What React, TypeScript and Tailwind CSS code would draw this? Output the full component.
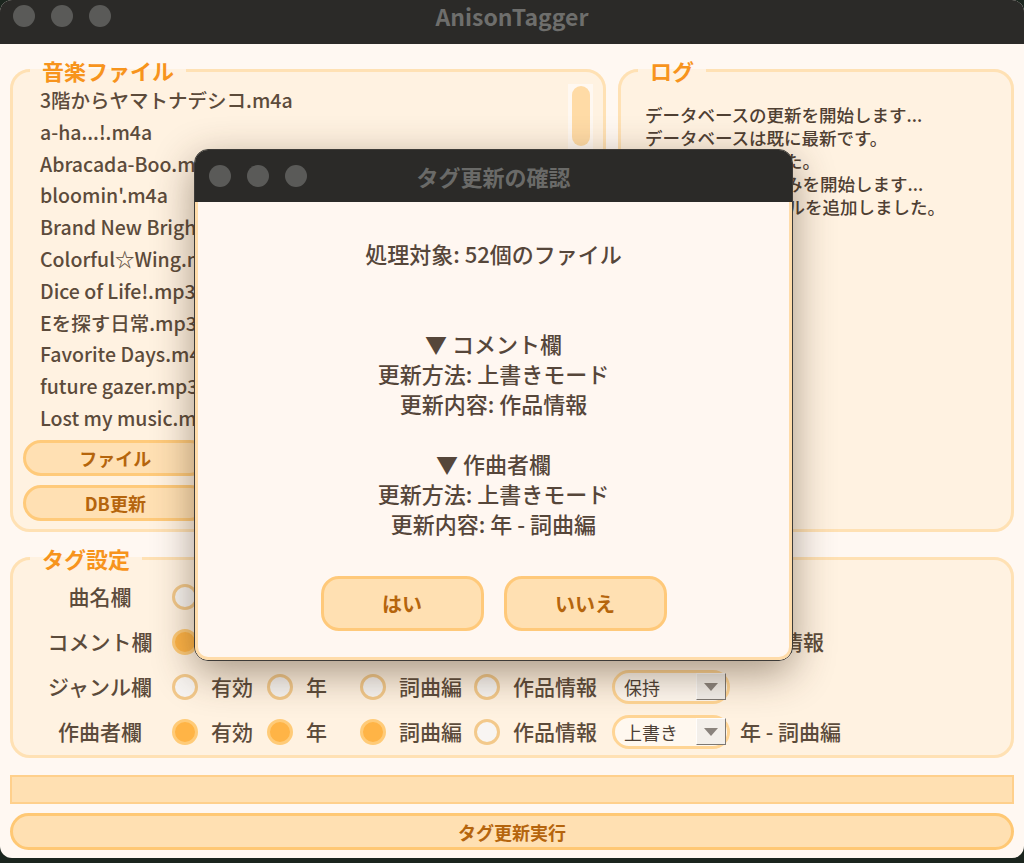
import React from "react";

const files = [
  "3階からヤマトナデシコ.m4a",
  "a-ha...!.m4a",
  "Abracada-Boo.m4a",
  "bloomin'.m4a",
  "Brand New Brightness.m4a",
  "Colorful☆Wing.m4a",
  "Dice of Life!.mp3",
  "Eを探す日常.mp3",
  "Favorite Days.m4a",
  "future gazer.mp3",
  "Lost my music.m4a",
  "Moving Sound.m4a",
  "Now Loading!!!!.m4a",
];

const logs = [
  "データベースの更新を開始します...",
  "データベースは既に最新です。",
  "更新が完了しました。",
  "ファイルの読み込みを開始します...",
  "52個の音楽ファイルを追加しました。",
];

function Radio({ checked }: { checked: boolean }) {
  return checked ? (
    <span className="block w-[26px] h-[26px] shrink-0 rounded-full border-[3px] border-[#ffcb78] bg-[#ffb446]" />
  ) : (
    <span className="block w-[26px] h-[26px] shrink-0 rounded-full border-[3px] border-[#f3c98b] bg-[#f8f5f2]" />
  );
}

function Option({ checked, label, w }: { checked: boolean; label: string; w: string }) {
  return (
    <div className={`flex items-center gap-[13px] ${w}`}>
      <Radio checked={checked} />
      <span>{label}</span>
    </div>
  );
}

function Combo({ value }: { value: string }) {
  return (
    <div className="flex items-center w-[118px] h-[34px] rounded-full border-[3px] border-[#ffd595] bg-[#fff8ef] pl-[9px] pr-[1px]">
      <span className="flex-1 text-[18px] font-normal text-[#4d4035] leading-none">{value}</span>
      <span className="flex items-center justify-center w-[30px] h-[27px] bg-[#f3efea] border-t border-l border-t-[#fffdfb] border-l-[#fffdfb] border-r border-b border-r-[#7d7873] border-b-[#7d7873]">
        <svg width="14" height="8" viewBox="0 0 14 8">
          <path d="M0 0 L14 0 L7 8 Z" fill="#8a837d" />
        </svg>
      </span>
    </div>
  );
}

function TagRow({
  label,
  v,
  combo,
  extra,
}: {
  label: string;
  v: [boolean, boolean, boolean, boolean];
  combo: string;
  extra?: string;
}) {
  return (
    <div className="flex items-center h-[45px] pl-[27px]">
      <div className="w-[120px] text-center">{label}</div>
      <div className="ml-[12px] flex items-center">
        <Option checked={v[0]} label="有効" w="w-[95px]" />
        <Option checked={v[1]} label="年" w="w-[93px]" />
        <Option checked={v[2]} label="詞曲編" w="w-[114px]" />
        <Option checked={v[3]} label="作品情報" w="w-[138px]" />
        <Combo value={combo} />
        {extra && <span className="ml-[10px]">{extra}</span>}
      </div>
    </div>
  );
}

function Lights() {
  return (
    <div className="flex items-center gap-[16px]">
      <span className="block w-[22px] h-[22px] rounded-full bg-[#5a5a58]" />
      <span className="block w-[22px] h-[22px] rounded-full bg-[#5a5a58]" />
      <span className="block w-[22px] h-[22px] rounded-full bg-[#5a5a58]" />
    </div>
  );
}

function PanelButton({ label }: { label: string }) {
  return (
    <button className="h-[36px] rounded-full border-[3px] border-[#ffca7a] bg-[#ffe0b3] text-[#b5650d] font-bold text-[18px] leading-none">
      {label}
    </button>
  );
}

export default function App() {
  return (
    <div className="relative w-[1024px] h-[863px] bg-[#1b251e] font-['Noto_Sans_CJK_JP','Noto_Sans',sans-serif] text-[#5c4b3b]">
      <div className="flex flex-col h-[858px] rounded-[12px] overflow-hidden bg-[#fff8f2]">
        {/* title bar */}
        <div className="relative h-[44px] bg-[#2b2a28] shrink-0">
          <div className="absolute left-[13px] top-[5px]">
            <Lights />
          </div>
          <div className="flex justify-center pt-[2px]">
            <span className="text-[23px] font-bold text-[#6e6e6c] leading-[28px]">AnisonTagger</span>
          </div>
        </div>

        <div className="flex flex-col px-[10px] pb-[8px] pt-[14px]">
          {/* top panels */}
          <div className="flex gap-[12px] h-[474px]">
            <fieldset className="w-[596px] rounded-[20px] border-[3px] border-[#ffe1b4] bg-[#fff2e1]">
              <legend className="ml-[17px] px-[12px] text-[22px] leading-[24px] font-bold text-[#f7941d]">
                音楽ファイル
              </legend>
              <div className="px-[10px] pt-[2px]">
                <div className="flex h-[350px] overflow-hidden">
                  <div className="flex-1 pl-[17px] text-[19.5px] font-medium">
                    {files.map((f) => (
                      <div key={f} className="h-[31.8px] leading-[31.8px] whitespace-nowrap">
                        {f}
                      </div>
                    ))}
                  </div>
                  <div className="w-[25px] bg-[#fff8f1] pt-[2px] pl-[4px]">
                    <div className="w-[18px] h-[60px] rounded-full bg-[#ffdba6]" />
                  </div>
                </div>
                <div className="grid grid-cols-3 gap-x-[8px] gap-y-[9px] mt-[6px]">
                  <PanelButton label="ファイル" />
                  <PanelButton label="フォルダ" />
                  <PanelButton label="クリア" />
                  <PanelButton label="DB更新" />
                  <PanelButton label="DB再構築" />
                  <PanelButton label="設定" />
                </div>
              </div>
            </fieldset>

            <fieldset className="flex-1 rounded-[20px] border-[3px] border-[#ffe1b4] bg-[#fff2e1]">
              <legend className="ml-[17px] px-[12px] text-[22px] leading-[24px] font-bold text-[#f7941d]">
                ログ
              </legend>
              <div className="pl-[24px] pt-[21px] text-[17.5px] leading-[23px] font-medium text-[#4f4033]">
                {logs.map((l) => (
                  <div key={l} className="whitespace-nowrap">
                    {l}
                  </div>
                ))}
              </div>
            </fieldset>
          </div>

          {/* tag settings */}
          <fieldset className="mt-[14px] h-[212px] rounded-[20px] border-[3px] border-[#ffe1b4] bg-[#fff2e1]">
            <legend className="ml-[17px] px-[12px] text-[22px] leading-[24px] font-bold text-[#f7941d]">
              タグ設定
            </legend>
            <div className="pt-[4px] text-[21px] font-medium">
              <TagRow label="曲名欄" v={[false, false, false, false]} combo="保持" />
              <TagRow label="コメント欄" v={[true, false, false, true]} combo="上書き" extra="作品情報" />
              <TagRow label="ジャンル欄" v={[false, false, false, false]} combo="保持" />
              <TagRow label="作曲者欄" v={[true, true, true, false]} combo="上書き" extra="年 - 詞曲編" />
            </div>
          </fieldset>

          {/* progress */}
          <div className="mt-[17px] h-[29px] border-2 border-[#ffd08c] bg-[#ffe0b2]" />

          {/* run button */}
          <button className="mt-[9px] h-[37px] rounded-full border-[3px] border-[#ffc874] bg-[#ffe0b2] text-[#b5650d] font-bold text-[18px] leading-none">
            タグ更新実行
          </button>
        </div>
      </div>

      {/* dialog */}
      <div className="absolute left-[194px] top-[149px] w-[599px] rounded-[14px] border border-[#3d3b38] overflow-hidden shadow-[0_12px_40px_rgba(60,40,20,0.45)]">
        <div className="relative h-[52px] bg-[#2b2a28]">
          <div className="absolute left-[14px] top-[15px]">
            <Lights />
          </div>
          <div className="flex justify-center h-full items-center">
            <span className="text-[22px] font-bold text-[#6a6a68]">タグ更新の確認</span>
          </div>
        </div>
        <div className="flex flex-col items-center bg-[#fff7f1] border-x-[3px] border-b-[3px] border-[#ffdcaa] rounded-b-[13px] pt-[36px] pb-[26px]">
          <div className="text-center text-[22px] leading-[30px] font-medium text-[#56463a]">
            <div>処理対象: 52個のファイル</div>
            <div>&nbsp;</div>
            <div>&nbsp;</div>
            <div>▼ コメント欄</div>
            <div>更新方法: 上書きモード</div>
            <div>更新内容: 作品情報</div>
            <div>&nbsp;</div>
            <div>▼ 作曲者欄</div>
            <div>更新方法: 上書きモード</div>
            <div>更新内容: 年 - 詞曲編</div>
          </div>
          <div className="flex gap-[20px] mt-[38px]">
            <button className="w-[163px] h-[55px] rounded-[18px] border-[3px] border-[#ffc97a] bg-[#ffe0b2] text-[#b5650d] font-bold text-[20px]">
              はい
            </button>
            <button className="w-[163px] h-[55px] rounded-[18px] border-[3px] border-[#ffc97a] bg-[#ffe0b2] text-[#b5650d] font-bold text-[20px]">
              いいえ
            </button>
          </div>
        </div>
      </div>
    </div>
  );
}
